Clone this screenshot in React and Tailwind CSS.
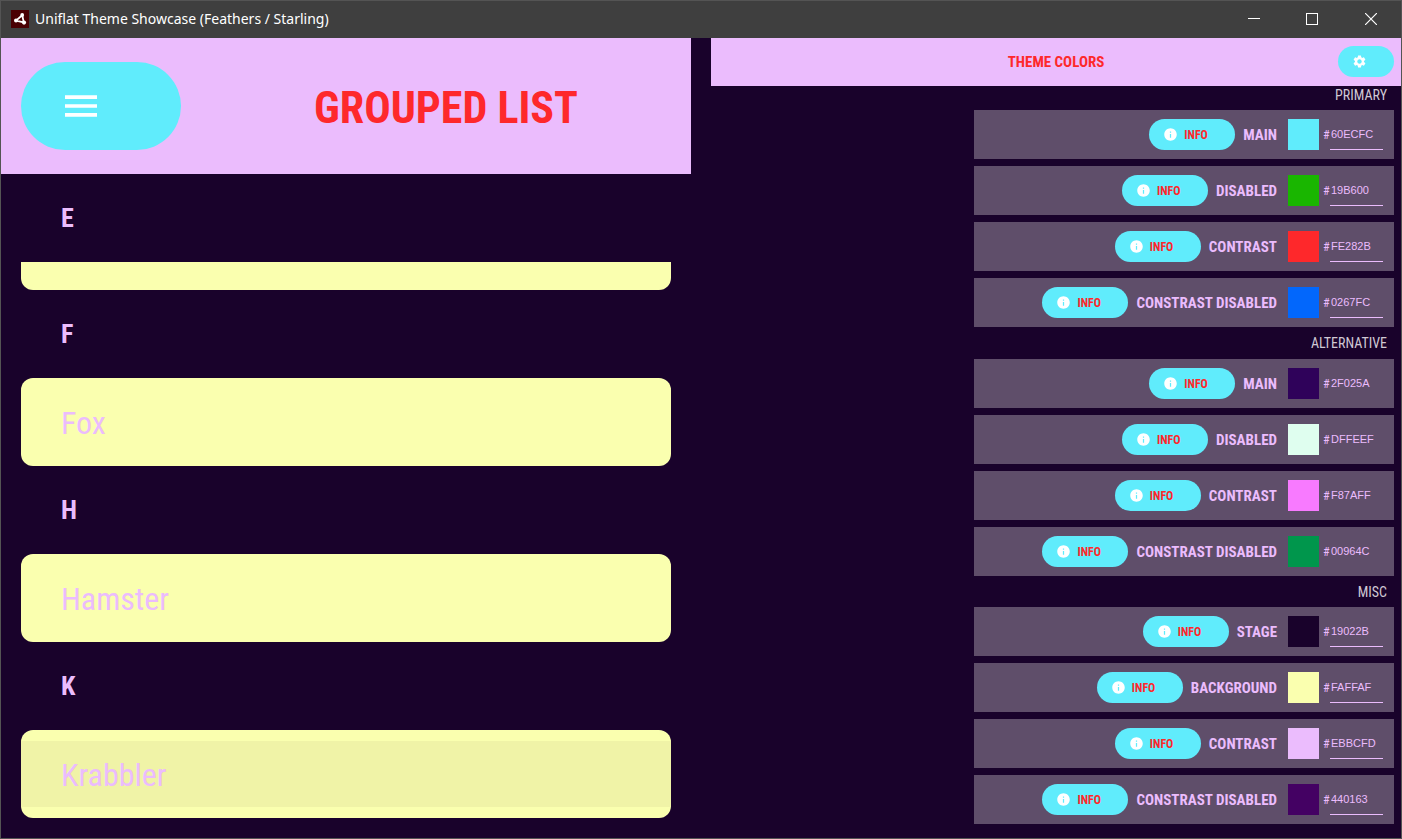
import React from "react";
import { MdInfo, MdSettings } from "react-icons/md";

const groups = [
  {
    name: "Primary",
    head: "h-6 pb-1.5",
    colors: [
      { label: "Main", hex: "60ECFC" },
      { label: "Disabled", hex: "19B600" },
      { label: "Contrast", hex: "FE282B" },
      { label: "Constrast disabled", hex: "0267FC" },
    ],
  },
  {
    name: "Alternative",
    head: "h-8",
    locked: true,
    colors: [
      { label: "Main", hex: "2F025A" },
      { label: "Disabled", hex: "DFFEEF" },
      { label: "Contrast", hex: "F87AFF" },
      { label: "Constrast disabled", hex: "00964C" },
    ],
  },
  {
    name: "Misc",
    head: "h-[31px]",
    colors: [
      { label: "Stage", hex: "19022B" },
      { label: "Background", hex: "FAFFAF" },
      { label: "Contrast", hex: "EBBCFD" },
      { label: "Constrast disabled", hex: "440163" },
    ],
  },
];

const animals = [
  { letter: "F", item: "Fox" },
  { letter: "H", item: "Hamster" },
  { letter: "K", item: "Krabbler", pressed: true },
];

function AppIcon() {
  return (
    <svg viewBox="0 0 18 18" className="size-[18px]" aria-hidden="true">
      <rect width="18" height="18" fill="#4a0003" />
      <path
        d="M11.2 5.2 5 10.6l7.8 1.8z"
        stroke="#fff"
        strokeWidth="1.8"
        fill="none"
        strokeLinejoin="round"
      />
      <circle cx="11.2" cy="5" r="1.9" fill="#fff" />
      <circle cx="5" cy="10.6" r="2" fill="#fff" />
      <circle cx="13" cy="12.6" r="2.1" fill="#fff" />
    </svg>
  );
}

function TitleBar() {
  return (
    <header className="flex h-[37px] items-center bg-[#3f3f3f] pb-0.5 pl-[10px] text-white">
      <AppIcon />
      <span className="ml-1.5 flex-1 font-['Noto_Sans',sans-serif] text-sm">
        Uniflat Theme Showcase (Feathers / Starling)
      </span>
      <div className="flex self-stretch">
        <button aria-label="Minimize" className="grid w-[58px] place-items-center">
          <svg viewBox="0 0 12 12" className="size-3" shapeRendering="crispEdges" stroke="#fff">
            <path d="M0 5.5h12" />
          </svg>
        </button>
        <button aria-label="Maximize" className="grid w-[58px] place-items-center">
          <svg viewBox="0 0 12 12" className="size-3" shapeRendering="crispEdges" stroke="#fff" fill="none">
            <rect x=".5" y=".5" width="11" height="11" />
          </svg>
        </button>
        <button aria-label="Close" className="grid w-[60px] place-items-center">
          <svg viewBox="0 0 12 12" className="size-3" stroke="#fff" strokeWidth="1.2">
            <path d="M0 0l12 12M12 0L0 12" />
          </svg>
        </button>
      </div>
    </header>
  );
}

function ListHeading({ children }) {
  return (
    <h2 className="flex h-[88px] items-center px-10 text-[26px] font-bold text-[#ebbcfd]">
      {children}
    </h2>
  );
}

function GroupedList() {
  return (
    <section>
      <div className="flex h-[136px] items-center bg-[#ebbcfd] px-5">
        <button
          aria-label="Menu"
          className="flex h-[88px] w-40 items-center rounded-[44px] bg-[#60ecfc] pl-11"
        >
          <svg viewBox="3 6 18 12" className="h-[22px] w-8" fill="#fff">
            <path d="M3 18h18v-2H3v2zm0-5h18v-2H3v2zm0-7v2h18V6H3z" />
          </svg>
        </button>
        <h1 className="ml-10 flex-1 pt-1 text-center text-[44px] font-bold text-[#fe282b]">
          GROUPED LIST
        </h1>
      </div>
      <div className="px-5 pb-5">
        <ListHeading>E</ListHeading>
        <div className="h-7 rounded-b-xl bg-[#faffaf]" />
        {animals.map(({ letter, item, pressed }) => (
          <div key={letter}>
            <ListHeading>{letter}</ListHeading>
            <div className="flex h-[88px] flex-col justify-center rounded-xl bg-[#faffaf]">
              <div
                className={`flex h-[66px] items-center px-10 pt-0.5 text-[32px] text-[#ebbcfd] ${
                  pressed ? "bg-[#f0f3a7]" : ""
                }`}
              >
                {item}
              </div>
            </div>
          </div>
        ))}
      </div>
    </section>
  );
}

function ColorRow({ group, label, hex, locked }) {
  const id = `${group}-${label}`.replace(/\s/g, "-").toLowerCase();
  return (
    <div className="flex h-[49px] items-center justify-end bg-[#5f4e6a] pr-[11px] text-[#ebbcfd]">
      <button className="flex h-[31px] w-[86px] items-center gap-1.5 rounded-full bg-[#60ecfc] pl-[14px] text-xs font-bold text-[#fe282b]">
        <MdInfo className="size-[15px] text-white" />
        INFO
      </button>
      <label htmlFor={id} className="ml-2 pt-px text-[15px] font-bold uppercase">
        {label}
      </label>
      <span className="ml-[11px] size-[31px]" style={{ backgroundColor: `#${hex}` }} />
      <span className="ml-1 w-[7px] pt-px text-xs">#</span>
      <input
        id={id}
        defaultValue={hex}
        disabled={locked}
        className={`h-[31px] w-[53px] border-b pl-px font-['Liberation_Sans',sans-serif] text-[11px] outline-none ${
          locked ? "border-transparent" : "border-[#ebbcfd]"
        }`}
      />
    </div>
  );
}

function ThemeColors() {
  return (
    <section>
      <div className="grid h-12 grid-cols-[1fr_auto_1fr] items-center bg-[#ebbcfd] px-[7px] pb-px">
        <h1 className="col-start-2 pt-0.5 text-[15px] font-bold text-[#fe282b]">THEME COLORS</h1>
        <button
          aria-label="Settings"
          className="flex h-[31px] w-14 items-center justify-self-end rounded-full bg-[#60ecfc] pl-[14px]"
        >
          <MdSettings className="size-[15px] text-white" />
        </button>
      </div>
      <div className="ml-auto w-[427px] max-w-full pr-[7px]">
        {groups.map((g) => (
          <div key={g.name}>
            <h2
              className={`flex items-center justify-end pr-[7px] text-sm text-[#d0c8d4] uppercase ${g.head}`}
            >
              {g.name}
            </h2>
            <div className="flex flex-col gap-[7px]">
              {g.colors.map((c) => (
                <ColorRow key={c.label} group={g.name} locked={g.locked} {...c} />
              ))}
            </div>
          </div>
        ))}
      </div>
    </section>
  );
}

export default function App() {
  return (
    <div className="flex min-h-screen flex-col border border-[#545454] bg-[#19022b] font-['Roboto_Condensed','Liberation_Sans_Narrow',Roboto,sans-serif]">
      <TitleBar />
      <main className="grid flex-1 grid-cols-2 gap-5">
        <GroupedList />
        <ThemeColors />
      </main>
    </div>
  );
}
